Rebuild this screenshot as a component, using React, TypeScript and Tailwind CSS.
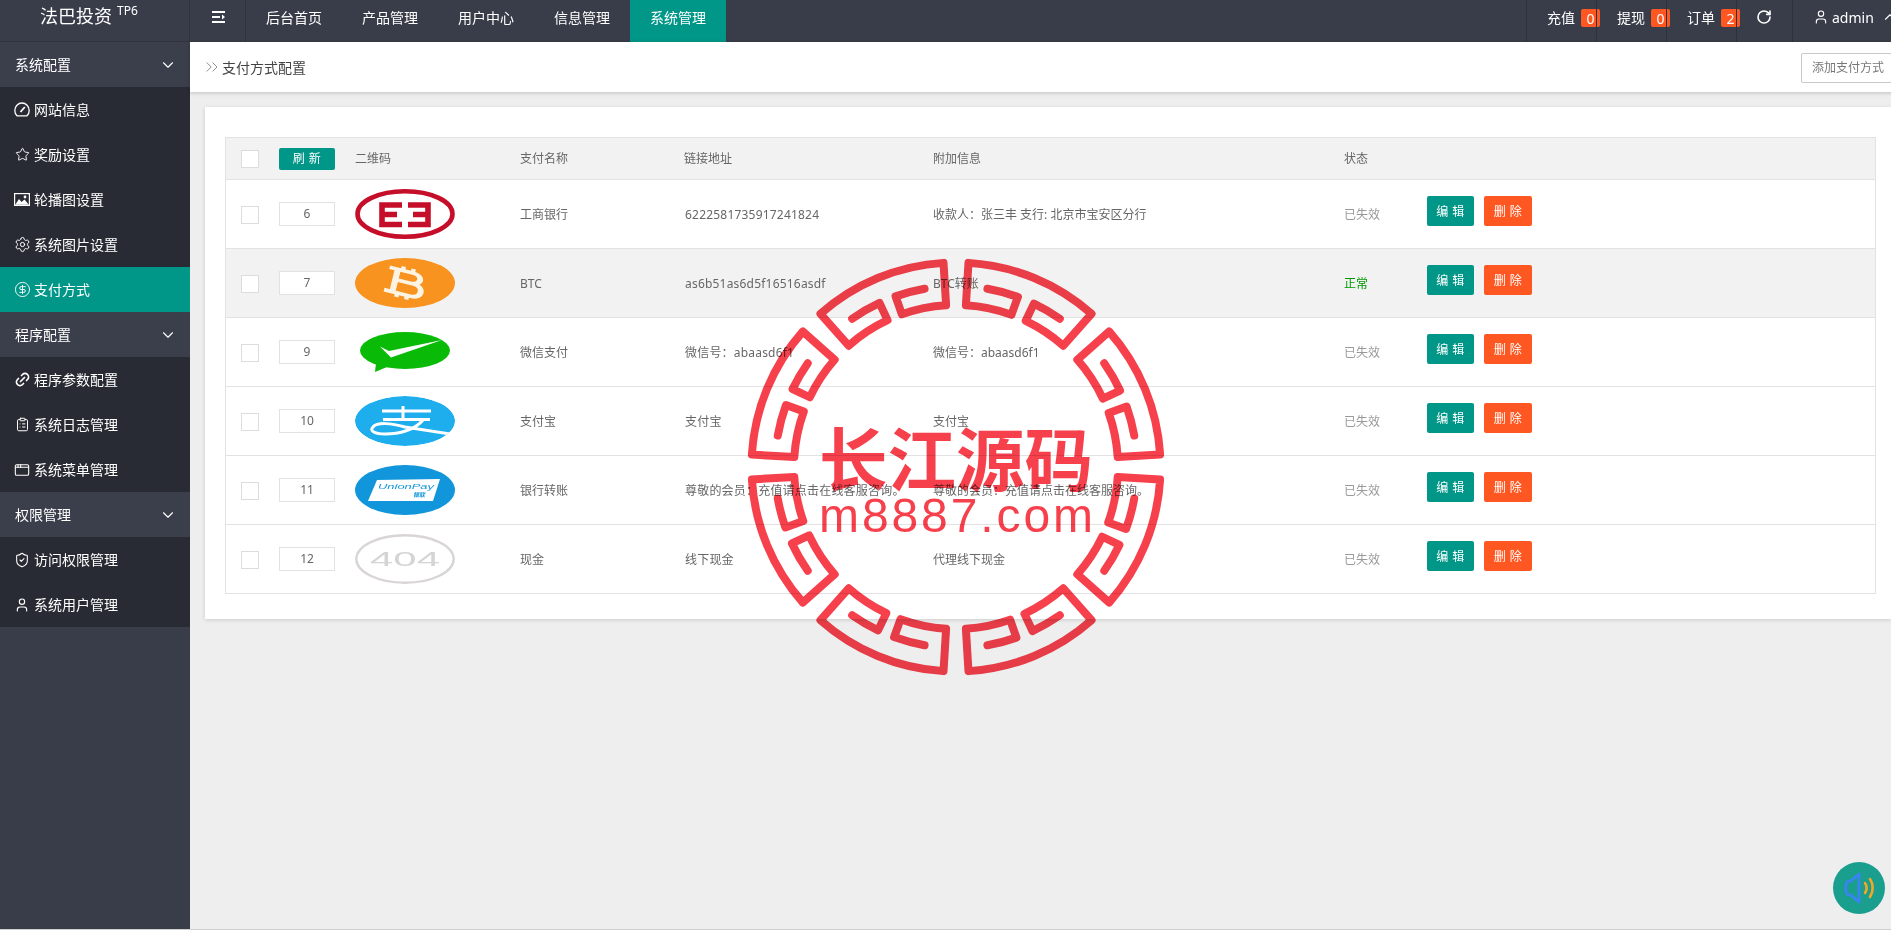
import React from "react";
import {
  Star,
  Settings,
  CircleDollarSign,
  Link2,
  ClipboardList,
  AppWindow,
  ShieldCheck,
  User,
  ChevronDown,
  ChevronUp,
  RotateCw,
  ChevronsRight,
} from "lucide-react";

// 网站信息 icon - dashboard
const DashIcon = () => (
  <svg width="16" height="15" viewBox="0 0 16 15" fill="none" stroke="#fff" strokeWidth="1.3" className="shrink-0">
    <path d="M3 13.8 H13 C14.4 12.6 15.2 10.8 15.2 8.6 C15.2 4.4 12 1 8 1 C4 1 0.8 4.4 0.8 8.6 C0.8 10.8 1.6 12.6 3 13.8 Z" />
    <path d="M6.5 10 L10.8 5" strokeWidth="1.8" />
  </svg>
);

// 轮播图 icon - filled picture
const PictureIcon = () => (
  <svg width="16" height="13" viewBox="0 0 16 13" className="shrink-0">
    <rect x="0" y="0" width="16" height="13" fill="#fff" />
    <rect x="1.2" y="1.2" width="13.6" height="10.6" fill="#282b33" />
    <path d="M1.2 11.8 L5 6 L7.5 9 L10.5 6.5 L14.8 11.8 Z" fill="#fff" />
    <circle cx="11" cy="4" r="1.4" fill="#fff" />
  </svg>
);

const menuGroups = [
  {
    title: "系统配置",
    items: [
      { label: "网站信息", icon: <DashIcon /> },
      { label: "奖励设置", icon: <Star size={15} strokeWidth={1.5} className="shrink-0" /> },
      { label: "轮播图设置", icon: <PictureIcon /> },
      { label: "系统图片设置", icon: <Settings size={17} strokeWidth={1.4} className="shrink-0" /> },
      { label: "支付方式", icon: <CircleDollarSign size={17} strokeWidth={1.3} className="shrink-0" />, active: true },
    ],
  },
  {
    title: "程序配置",
    items: [
      { label: "程序参数配置", icon: <Link2 size={17} strokeWidth={2.4} className="-rotate-45 shrink-0" /> },
      { label: "系统日志管理", icon: <ClipboardList size={15} strokeWidth={1.6} className="shrink-0" /> },
      { label: "系统菜单管理", icon: <AppWindow size={16} strokeWidth={1.6} className="shrink-0" /> },
    ],
  },
  {
    title: "权限管理",
    items: [
      { label: "访问权限管理", icon: <ShieldCheck size={16} strokeWidth={1.6} className="shrink-0" /> },
      { label: "系统用户管理", icon: <User size={16} strokeWidth={1.7} className="shrink-0" /> },
    ],
  },
];

const navItems = ["后台首页", "产品管理", "用户中心", "信息管理", "系统管理"];
const counters = [
  { label: "充值", value: 0 },
  { label: "提现", value: 0 },
  { label: "订单", value: 2 },
];

// 银行/支付 logo
const IcbcLogo = () => (
  <svg width="100" height="50" viewBox="0 0 100 50">
    <ellipse cx="50" cy="25" rx="47.5" ry="22.7" fill="#fff" stroke="#c50f2a" strokeWidth="4.6" />
    <path
      d="M47 16 H27 V25.5 H42 M27 25.5 V35.5 H47 M53 16 H73 V25.5 H58 M73 25.5 V35.5 H53"
      fill="none"
      stroke="#c50f2a"
      strokeWidth="5.6"
    />
  </svg>
);

const BtcLogo = () => (
  <svg width="100" height="50" viewBox="0 0 100 50">
    <ellipse cx="50" cy="25" rx="50" ry="25" fill="#f7931e" />
    <g
      transform="translate(50 25) rotate(14) scale(1.7 1.05)"
      fill="none"
      stroke="#fdf3e3"
      strokeWidth="3.6"
    >
      <path d="M-11 -11 H3 C10 -11 10 -1 3 -1 H-6 M-6 -11 V11 M-6 -1 H5 C12 -1 12 11 5 11 H-11" />
      <path d="M-3 -11 V-15 M3 -11 V-15 M-3 11 V15 M3 11 V15" strokeWidth="2.6" />
    </g>
  </svg>
);

const WechatLogo = () => (
  <svg width="100" height="50" viewBox="0 0 100 50">
    <ellipse cx="50" cy="23.5" rx="45" ry="18.5" fill="#09bb07" />
    <path d="M20 45 L21 36 L32 40 Z" fill="#09bb07" />
    <path d="M25 19.5 L34 24 L87 13 L36 30.5 Z" fill="#fff" />
  </svg>
);

const AlipayLogo = () => (
  <svg width="100" height="50" viewBox="0 0 100 50">
    <defs>
      <clipPath id="alipay-clip">
        <ellipse cx="50" cy="25" rx="50" ry="25" />
      </clipPath>
    </defs>
    <g clipPath="url(#alipay-clip)">
      <ellipse cx="50" cy="25" rx="50" ry="25" fill="#1eaeee" />
      <path
        d="M27 15 H76 M48 10 V24 M28 23.5 H75 M68 24 C60 34 44 38 30 38 C20 38 14 35 18 31 C22 26 36 27 50 31 L102 39"
        fill="none"
        stroke="#fff"
        strokeWidth="3"
      />
    </g>
  </svg>
);

const UnionPayLogo = () => (
  <svg width="100" height="50" viewBox="0 0 100 50">
    <ellipse cx="50" cy="25" rx="50" ry="25" fill="#1296db" />
    <path d="M22 15 L85 14 L78 36 L13 36 Z" fill="#fff" />
    <text
      x="23"
      y="24"
      fontSize="8"
      fontStyle="italic"
      fill="#1296db"
      textLength="56"
      lengthAdjust="spacingAndGlyphs"
      fontFamily="Liberation Sans, sans-serif"
    >
      UnionPay
    </text>
    <text x="58" y="32" fontSize="6" fontStyle="italic" fontWeight="700" fill="#1296db" fontFamily="Noto Sans CJK SC, sans-serif">
      银联
    </text>
  </svg>
);

const NotFoundLogo = () => (
  <svg width="100" height="50" viewBox="0 0 100 50">
    <ellipse cx="50" cy="25" rx="48.7" ry="23.7" fill="#fff" stroke="#d9d5d5" strokeWidth="2.4" />
    <text
      x="15"
      y="32"
      fontSize="21"
      fill="#d4d4d4"
      textLength="70"
      lengthAdjust="spacingAndGlyphs"
      fontFamily="Liberation Sans, sans-serif"
    >
      404
    </text>
  </svg>
);

const rows = [
  { id: 6, logo: <IcbcLogo />, name: "工商银行", addr: "6222581735917241824", info: "收款人：张三丰 支行: 北京市宝安区分行", ok: false },
  { id: 7, logo: <BtcLogo />, name: "BTC", addr: "as6b51as6d5f16516asdf", info: "BTC转账", ok: true },
  { id: 9, logo: <WechatLogo />, name: "微信支付", addr: "微信号：abaasd6f1", info: "微信号：abaasd6f1", ok: false },
  { id: 10, logo: <AlipayLogo />, name: "支付宝", addr: "支付宝", info: "支付宝", ok: false },
  { id: 11, logo: <UnionPayLogo />, name: "银行转账", addr: "尊敬的会员：充值请点击在线客服咨询。", info: "尊敬的会员：充值请点击在线客服咨询。", ok: false },
  { id: 12, logo: <NotFoundLogo />, name: "现金", addr: "线下现金", info: "代理线下现金", ok: false },
];

// 水印 seal
const SEAL_C = 210;
const pt = (r: number, deg: number) => {
  const a = (deg * Math.PI) / 180;
  return `${(SEAL_C + r * Math.sin(a)).toFixed(2)} ${(SEAL_C - r * Math.cos(a)).toFixed(2)}`;
};
const sealPath = (o: number) => {
  const [R1, R2, R3] = [204.5, 162, 181];
  const arc = (r: number, deg: number, sweep: number) => `A${r} ${r} 0 0 ${sweep} ${pt(r, deg + o)}`;
  return [
    `M${pt(R3, 10 + o)}`,
    arc(R3, 20, 1),
    `L${pt(R2, 20 + o)}`,
    arc(R2, 3.5, 0),
    `L${pt(R1, 3.5 + o)}`,
    arc(R1, 41.5, 1),
    `L${pt(R2, 41.5 + o)}`,
    arc(R2, 25.5, 0),
    `L${pt(R3, 25.5 + o)}`,
    arc(R3, 35, 1),
  ].join(" ");
};

const Seal = () => (
  <div className="absolute left-[746px] top-[257px] w-[420px] h-[420px] mix-blend-multiply pointer-events-none">
    <svg width="420" height="420" viewBox="0 0 420 420">
      {[0, 45, 90, 135, 180, 225, 270, 315].map((o) => (
        <path
          key={o}
          d={sealPath(o)}
          fill="none"
          stroke="#f6404c"
          strokeWidth="8"
          strokeLinejoin="round"
          strokeLinecap="round"
        />
      ))}
      <text
        x="210"
        y="229"
        textAnchor="middle"
        fontSize="69"
        fontWeight="700"
        fill="#f6404c"
        textLength="274"
        lengthAdjust="spacingAndGlyphs"
        fontFamily="Noto Sans CJK SC, sans-serif"
      >
        长江源码
      </text>
      <text
        x="210"
        y="275"
        textAnchor="middle"
        fontSize="48"
        fill="#f6404c"
        textLength="274"
        fontFamily="Liberation Sans, sans-serif"
      >
        m8887.com
      </text>
    </svg>
  </div>
);

const Sidebar = () => (
  <aside className="w-[190px] shrink-0 bg-[#393d49] text-white text-[14px]">
    {menuGroups.map((group) => (
      <div key={group.title}>
        <div className="h-[45px] flex items-center justify-between pl-[15px] pr-[13px] bg-[#3b3f4c]">
          <span>{group.title}</span>
          <ChevronDown size={18} strokeWidth={1.5} />
        </div>
        {group.items.map((item) => (
          <div
            key={item.label}
            className={`h-[45px] flex items-center pl-[14px] gap-[4px] ${item.active ? "bg-[#009688]" : "bg-[#282b33]"}`}
          >
            <span className="w-[16px] flex justify-center">{item.icon}</span>
            <span>{item.label}</span>
          </div>
        ))}
      </div>
    ))}
  </aside>
);

const Header = () => (
  <header className="h-[42px] shrink-0 flex bg-[#393d49] text-white text-[14px]">
    <div className="w-[190px] shrink-0 border-r border-b border-[#30333f] pl-[40px] pt-[4px] flex items-start">
      <span className="text-[18px] leading-[24px]">法巴投资</span>
      <span className="text-[12px] leading-[14px] ml-[5px]">TP6</span>
    </div>
    <div className="w-[56px] shrink-0 border-r border-[#30333f] pl-[22px] pt-[11px]">
      <svg width="13" height="12" viewBox="0 0 13 12" className="block">
        <path d="M0 0 H13 V2 H0 Z M0 5 H8 V7 H0 Z M0 10 H13 V12 H0 Z M10 3.5 L13 6 L10 8.5 Z" fill="#fff" />
      </svg>
    </div>
    {navItems.map((n, i) => (
      <div key={n} className={`w-[96px] shrink-0 flex items-center justify-center pb-[8px] ${i === 4 ? "bg-[#009688]" : ""}`}>
        {n}
      </div>
    ))}
    <div className="flex-1" />
    {counters.map((c) => (
      <div key={c.label} className="w-[70px] shrink-0 border-l border-[#2f323e] pl-[20px] pb-[8px] flex items-center whitespace-nowrap">
        <span className="shrink-0">{c.label}</span>
        <span className="ml-[6px] w-[19px] h-[18px] shrink-0 bg-[#ff5722] rounded-[2px] flex items-center justify-center mt-[2px]">
          {c.value}
        </span>
      </div>
    ))}
    <div className="w-[56px] shrink-0 border-l border-[#2f323e] pl-[19px] pb-[8px] flex items-center">
      <RotateCw size={16} strokeWidth={2.4} className="shrink-0" />
    </div>
    <div className="w-[99px] shrink-0 border-l border-[#2f323e] pl-[20px] pb-[8px] flex items-center gap-[3px] whitespace-nowrap">
      <User size={16} strokeWidth={1.7} className="shrink-0" />
      <span className="shrink-0">admin</span>
      <ChevronUp size={18} strokeWidth={1.5} className="ml-[4px] shrink-0" />
    </div>
  </header>
);

const Table = () => (
  <div className="border-x border-b border-[#e2e2e2] text-[12px] text-[#666]">
    <div className="h-[42px] border-t border-[#e2e2e2] bg-[#f2f2f2] grid grid-cols-[53px_76px_165px_164px_249px_411px_83px_1fr] items-center">
      <div className="pl-[15px]">
        <div className="w-[18px] h-[18px] bg-white border border-[#dcdcdc]" />
      </div>
      <div>
        <button className="w-[56px] h-[22px] bg-[#009688] text-white rounded-[2px] text-[12px] tracking-[0.5px] pt-[1px]">刷 新</button>
      </div>
      <div>二维码</div>
      <div>支付名称</div>
      <div>链接地址</div>
      <div>附加信息</div>
      <div>状态</div>
      <div />
    </div>
    {rows.map((r) => (
      <div
        key={r.id}
        className={`h-[69px] border-t border-[#e2e2e2] grid grid-cols-[53px_76px_165px_164px_249px_411px_83px_1fr] items-center ${r.id === 7 ? "bg-[#f2f2f2]" : "bg-white"}`}
      >
        <div className="pl-[15px] mt-[2px]">
          <div className="w-[18px] h-[18px] bg-white border border-[#dcdcdc]" />
        </div>
        <div>
          <div className="w-[56px] h-[24px] bg-white border border-[#e2e2e2] flex items-center justify-center">{r.id}</div>
        </div>
        <div className="h-[50px]">{r.logo}</div>
        <div className="mt-[2px]">{r.name}</div>
        <div className="mt-[2px] pl-[1px] tracking-[0.2px] whitespace-nowrap">{r.addr}</div>
        <div className="mt-[2px] whitespace-nowrap">{r.info}</div>
        <div className={`mt-[2px] ${r.ok ? "text-[#009900]" : "text-[#999]"}`}>{r.ok ? "正常" : "已失效"}</div>
        <div className="flex gap-[10px] mb-[6px]">
          <button className="w-[47px] h-[30px] bg-[#009688] text-white rounded-[2px] text-[12px] tracking-[0.5px] pt-[2px]">编 辑</button>
          <button className="w-[48px] h-[30px] bg-[#ff5722] text-white rounded-[2px] text-[12px] tracking-[0.5px] pt-[2px]">删 除</button>
        </div>
      </div>
    ))}
  </div>
);

const App = () => {
  return (
    <div className="relative w-[1891px] h-[930px] overflow-hidden flex flex-col bg-[#eeeeee] border-b border-[#cfcfcf] font-['Noto_Sans','Noto_Sans_CJK_SC',sans-serif]">
      <Header />
      <div className="flex-1 flex min-h-0">
        <Sidebar />
        <main className="flex-1 min-w-0">
          {/* 상단 타이틀 */}
          <div className="h-[50px] bg-white shadow-[0_1px_4px_rgba(0,0,0,0.2)] flex items-center justify-between pl-[15px] -mr-[4px]">
            <div className="flex items-center text-[14px] text-[#444]">
              <ChevronsRight size={20} strokeWidth={1} className="text-[#777] -ml-[3px]" />
              <span>支付方式配置</span>
            </div>
            <button className="w-[94px] h-[30px] mt-[2px] bg-white border border-[#c9c9c9] rounded-[2px] text-[12px] text-[#777]">
              添加支付方式
            </button>
          </div>
          {/* 리스트 카드 */}
          <div className="mt-[15px] ml-[15px] bg-white shadow-[0_1px_4px_rgba(0,0,0,0.15)] pt-[30px] pb-[25px] pl-[20px] pr-[15px]">
            <Table />
          </div>
        </main>
      </div>
      <Seal />
      {/* 语音 floating button */}
      <div className="absolute left-[1833px] top-[862px] w-[52px] h-[52px] rounded-full bg-[#1a9e8e] flex items-center justify-center">
        <svg width="34" height="34" viewBox="0 0 34 34" fill="none" strokeLinecap="round" strokeLinejoin="round">
          <path d="M17 3 L8 10.5 H5.5 C3 14 3 20 5.5 23.5 H8 L17 31 Z" stroke="#3b82f6" strokeWidth="2.6" />
          <path d="M23 12 C25 15 25 19 23 22" stroke="#f5a623" strokeWidth="2.6" />
          <path d="M28 8 C31.5 13 31.5 21 28 26" stroke="#f5a623" strokeWidth="2.6" />
        </svg>
      </div>
    </div>
  );
};

export default App;
